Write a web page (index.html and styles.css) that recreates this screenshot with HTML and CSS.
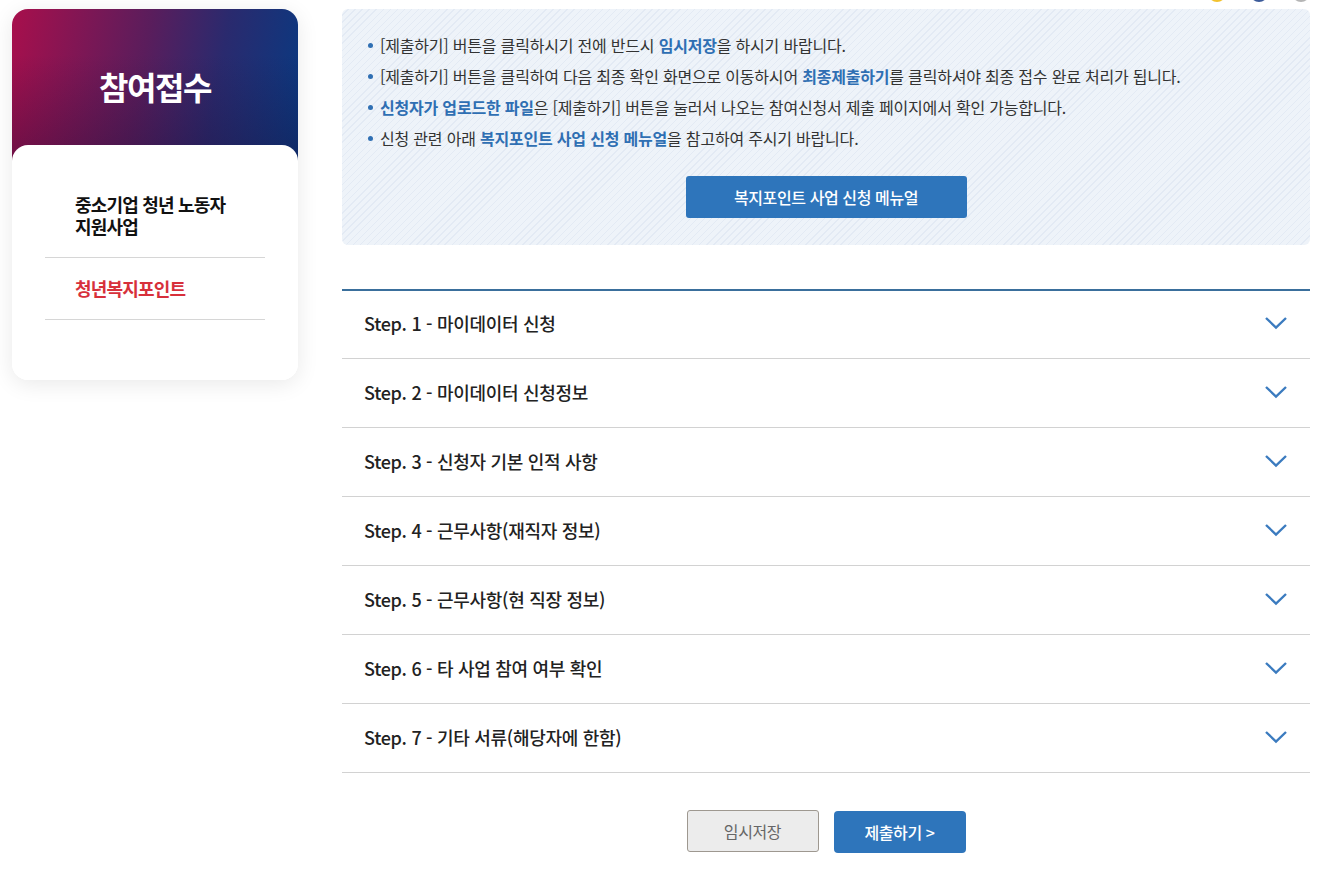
FILE: index.html
```html
<!DOCTYPE html>
<html lang="ko">
<head>
    <meta charset="UTF-8" />
    <meta name="viewport" content="width=device-width, initial-scale=1.0" />
    <title>참여접수</title>
    <link rel="stylesheet" href="styles.css">
</head>
<body>
    <div class="top-icons">
        <span class="dot dot-yellow"></span>
        <span class="dot dot-blue"></span>
        <span class="dot dot-grey"></span>
    </div>
    <div class="page">
        <aside class="side">
            <div class="side-head">
                <h2>참여접수</h2>
            </div>
            <ul class="side-menu">
                <li><a href="#">중소기업 청년 노동자<br>지원사업</a></li>
                <li class="on"><a href="#">청년복지포인트</a></li>
            </ul>
        </aside>

        <main class="content">
            <div class="notice">
                <ul>
                    <li>[제출하기] 버튼을 클릭하시기 전에 반드시 <b>임시저장</b>을 하시기 바랍니다.</li>
                    <li>[제출하기] 버튼을 클릭하여 다음 최종 확인 화면으로 이동하시어 <b>최종제출하기</b>를 클릭하셔야 최종 접수 완료 처리가 됩니다.</li>
                    <li><b>신청자가 업로드한 파일</b>은 [제출하기] 버튼을 눌러서 나오는 참여신청서 제출 페이지에서 확인 가능합니다.</li>
                    <li>신청 관련 아래 <b>복지포인트 사업 신청 메뉴얼</b>을 참고하여 주시기 바랍니다.</li>
                </ul>
                <div class="notice-btn">
                    <a href="#" class="btn-manual">복지포인트 사업 신청 메뉴얼</a>
                </div>
            </div>

            <div class="steps">
                <div class="step"><span>Step. 1 - 마이데이터 신청</span><svg class="chev" viewBox="0 0 24 14"><path d="M2 2 L12 11.5 L22 2" /></svg></div>
                <div class="step"><span>Step. 2 - 마이데이터 신청정보</span><svg class="chev" viewBox="0 0 24 14"><path d="M2 2 L12 11.5 L22 2" /></svg></div>
                <div class="step"><span>Step. 3 - 신청자 기본 인적 사항</span><svg class="chev" viewBox="0 0 24 14"><path d="M2 2 L12 11.5 L22 2" /></svg></div>
                <div class="step"><span>Step. 4 - 근무사항(재직자 정보)</span><svg class="chev" viewBox="0 0 24 14"><path d="M2 2 L12 11.5 L22 2" /></svg></div>
                <div class="step"><span>Step. 5 - 근무사항(현 직장 정보)</span><svg class="chev" viewBox="0 0 24 14"><path d="M2 2 L12 11.5 L22 2" /></svg></div>
                <div class="step"><span>Step. 6 - 타 사업 참여 여부 확인</span><svg class="chev" viewBox="0 0 24 14"><path d="M2 2 L12 11.5 L22 2" /></svg></div>
                <div class="step"><span>Step. 7 - 기타 서류(해당자에 한함)</span><svg class="chev" viewBox="0 0 24 14"><path d="M2 2 L12 11.5 L22 2" /></svg></div>
            </div>

            <div class="btn-area">
                <a href="#" class="btn btn-save">임시저장</a>
                <a href="#" class="btn btn-submit">제출하기 &gt;</a>
            </div>
        </main>
    </div>
</body>
</html>
```

FILE: styles.css
```css
body {
    margin: 0;
    background: #fff;
    font-family: "Noto Sans CJK KR", "Noto Sans", sans-serif;
    color: #222;
}
a {
    text-decoration: none;
    color: inherit;
}
ul {
    margin: 0;
    padding: 0;
    list-style: none;
}
.top-icons {
    position: absolute;
    top: -16px;
    left: 1208px;
    display: flex;
    gap: 24px;
}
.dot {
    width: 18px;
    height: 18px;
    border-radius: 50%;
}
.dot-yellow { background: #f2c22e; }
.dot-blue { background: #3c5b9a; }
.dot-grey { background: #b5b5b5; }

.page {
    display: flex;
    align-items: flex-start;
    gap: 44px;
    padding: 9px 12px;
}

/* side */
.side {
    width: 286px;
    flex-shrink: 0;
    border-radius: 16px;
    background: #fff;
    box-shadow: 0 4px 22px rgba(0, 0, 0, 0.09);
    overflow: hidden;
}
.side-head {
    height: 152px;
    margin-bottom: -16px;
    background:
        linear-gradient(to bottom, rgba(30, 10, 50, 0) 30%, rgba(30, 10, 50, 0.35) 100%),
        linear-gradient(100deg, #a80f4c 0%, #5a1d5c 45%, #2a2a6e 70%, #083a82 100%);
    text-align: center;
}
.side-head h2 {
    margin: 0;
    padding-top: 55px;
    font-size: 32px;
    font-weight: 700;
    letter-spacing: -1.5px;
    line-height: 44px;
    color: #fff;
}
.side-menu {
    position: relative;
    background: #fff;
    border-radius: 16px 16px 0 0;
    padding: 29px 33px 60px;
}
.side-menu li {
    border-bottom: 1px solid #d6d6d6;
}
.side-menu li a {
    display: block;
    padding: 19px 30px 20px;
    font-size: 18px;
    font-weight: 700;
    line-height: 22px;
    letter-spacing: -0.8px;
    color: #111;
}
.side-menu li.on a {
    color: #d7303b;
}

/* content */
.content {
    width: 968px;
}
.notice {
    border-radius: 6px;
    background-color: #eef3f9;
    background-image: repeating-linear-gradient(135deg, #eef3f9 0, #eef3f9 4px, #e3eaf4 4px, #e3eaf4 5px);
    padding: 21px 26px 27px;
}
.notice li {
    position: relative;
    padding-left: 12px;
    font-size: 16px;
    line-height: 31px;
    letter-spacing: -0.2px;
    color: #333;
}
.notice li::before {
    content: "";
    position: absolute;
    left: 0;
    top: 13px;
    width: 5px;
    height: 5px;
    border-radius: 50%;
    background: #2f6fb3;
}
.notice li b {
    color: #2f6fb3;
    font-weight: 700;
}
.notice-btn {
    display: flex;
    justify-content: center;
    margin-top: 22px;
}
.btn-manual {
    display: flex;
    align-items: center;
    justify-content: center;
    width: 281px;
    height: 42px;
    border-radius: 3px;
    background: #2e75bb;
    color: #fff;
    font-size: 16px;
    font-weight: 500;
    letter-spacing: -0.4px;
}

.steps {
    margin-top: 44px;
    border-top: 2px solid #3a6f9c;
}
.step {
    display: flex;
    align-items: center;
    justify-content: space-between;
    height: 68px;
    padding: 0 22px;
    border-bottom: 1px solid #d2d2d2;
}
.step:first-child {
    height: 67px;
}
.step span {
    font-size: 18px;
    font-weight: 500;
    letter-spacing: -0.3px;
    color: #222;
    margin-top: -3px;
}
.chev {
    width: 24px;
    height: 14px;
    margin-top: -3px;
}
.chev path {
    fill: none;
    stroke: #3b7bbf;
    stroke-width: 2.4;
}

.btn-area {
    display: flex;
    justify-content: center;
    gap: 15px;
    margin-top: 37px;
}
.btn {
    display: flex;
    align-items: center;
    justify-content: center;
    width: 132px;
    height: 42px;
    box-sizing: border-box;
    border-radius: 4px;
    font-size: 16px;
    letter-spacing: -0.4px;
}
.btn-save {
    background: #ececec;
    border: 1px solid #9e9890;
    color: #666;
    border-radius: 3px;
}
.btn-submit {
    background: #2e75bb;
    color: #fff;
    font-weight: 500;
    margin-top: 1px;
}
```
